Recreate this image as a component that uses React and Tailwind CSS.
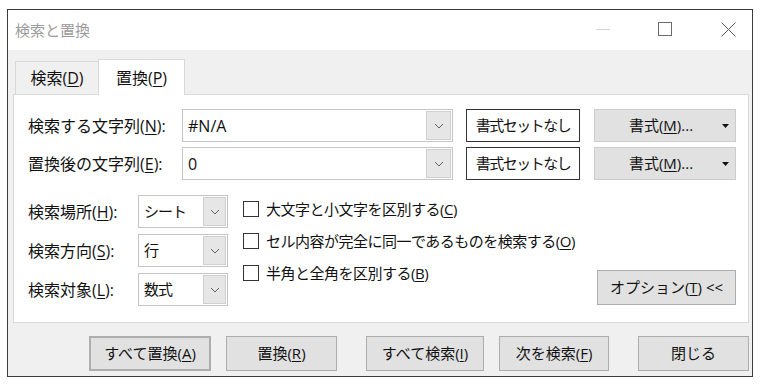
import React from "react";

const font = { fontFamily: '"Open Sans", "Noto Sans CJK JP", sans-serif' };

const Key = ({ children }) => (
  <span className="underline underline-offset-[2px] decoration-[1px]">{children}</span>
);

const Chevron = () => (
  <svg width="10" height="6" viewBox="0 0 10 6">
    <path d="M1 1 L5 5 L9 1" fill="none" stroke="#606060" strokeWidth="1" />
  </svg>
);

const Combo = ({ value, w, btn = "w-[25px]", text = "text-[16px]" }) => (
  <div className={`${w} h-[33px] flex border border-[#c4c4c4] bg-white`}>
    <div className={`flex-1 flex items-center pl-[5px] ${text} text-[#111]`}>{value}</div>
    <div className={`${btn} m-[1px] flex items-center justify-center bg-[#e6e6e6] border border-[#cfcfcf]`}>
      <Chevron />
    </div>
  </div>
);

const Check = ({ children }) => (
  <div className="h-[32px] flex items-center">
    <div className="w-[16px] h-[16px] border border-[#333] bg-white" />
    <span className="ml-[7px] text-[15px] tracking-[-0.5px] text-[#111]">{children}</span>
  </div>
);

const Btn = ({ children, className = "" }) => (
  <button
    className={`h-[35px] flex items-center justify-center bg-[#e1e1e1] border border-[#adadad] text-[15px] text-[#111] ${className}`}
  >
    {children}
  </button>
);

const FieldRow = ({ label, value, className = "" }) => (
  <div className={`flex items-center h-[33px] ${className}`}>
    <div className="w-[154px] text-[16px] text-[#111]">{label}</div>
    <Combo value={value} w="w-[271px]" />
    <button className="ml-[13px] w-[114px] h-[33px] bg-white border border-[#333] text-[15px] tracking-[-1.5px] text-[#111]">
      書式セットなし
    </button>
    <button className="ml-[14px] w-[142px] h-[33px] relative flex items-center justify-center bg-[#e1e1e1] border border-[#cccccc] text-[15px] text-[#111]">
      <span className="-ml-[8px]">
        書式(<Key>M</Key>)...
      </span>
      <svg className="absolute right-[6px] top-[14px]" width="7" height="4" viewBox="0 0 7 4">
        <path d="M0 0 H7 L3.5 4 Z" fill="#111" />
      </svg>
    </button>
  </div>
);

const SmallRow = ({ label, value }) => (
  <div className="flex items-center h-[33px]">
    <div className="w-[110px] text-[16px] text-[#111]">{label}</div>
    <Combo value={value} w="w-[90px]" btn="w-[23px]" text="text-[15px] tracking-[-1px]" />
  </div>
);

export default function App() {
  return (
    <div className="w-[760px] h-[384px] bg-white pl-[7px] pt-[9px]" style={font}>
      <div className="w-[746px] h-[368px] border border-[#3a3a3a] flex flex-col">
        {/* title bar */}
        <div className="h-[40px] bg-white flex items-center pl-[7px] relative">
          <span className="text-[15px] text-[#9b9b9b]">検索と置換</span>
          <div className="absolute left-[588px] top-[19px] w-[14px] h-px bg-[#d4d4d4]" />
          <div className="absolute left-[650px] top-[12px] w-[14px] h-[14px] border border-[#6b6b6b]" />
          <svg className="absolute left-[713px] top-[12px]" width="15" height="15" viewBox="0 0 15 15">
            <path d="M0.5 0.5 L14.5 14.5 M14.5 0.5 L0.5 14.5" stroke="#5a5a5a" strokeWidth="1" />
          </svg>
        </div>

        {/* body */}
        <div className="flex-1 bg-[#f0f0f0] pl-[5px]">
          <div className="mt-[9px] h-[35px] ml-[2px] flex items-end">
            <div className="w-[83px] h-[33px] border-t border-l border-[#d9d9d9] flex items-center justify-center text-[16px] text-[#111]">
              検索(<Key>D</Key>)
            </div>
            <div className="w-[87px] h-[36px] -mb-px relative z-10 bg-white border-t border-l border-r border-[#d9d9d9] flex items-center justify-center text-[16px] text-[#111]">
              置換(<Key>P</Key>)
            </div>
          </div>

          <div className="w-[736px] h-[229px] bg-white border border-[#d9d9d9] pl-[14px] pt-[14px]">
            <FieldRow label={<>検索する文字列(<Key>N</Key>):</>} value="#N/A" />
            <FieldRow label={<>置換後の文字列(<Key>E</Key>):</>} value="0" className="mt-[5px]" />

            <div className="mt-[15px] flex">
              <div className="flex flex-col gap-[6px]">
                <SmallRow label={<>検索場所(<Key>H</Key>):</>} value="シート" />
                <SmallRow label={<>検索方向(<Key>S</Key>):</>} value="行" />
                <SmallRow label={<>検索対象(<Key>L</Key>):</>} value="数式" />
              </div>
              <div className="ml-[15px] -mt-[2px] flex flex-col">
                <Check>大文字と小文字を区別する(<Key>C</Key>)</Check>
                <Check>セル内容が完全に同一であるものを検索する(<Key>O</Key>)</Check>
                <Check>半角と全角を区別する(<Key>B</Key>)</Check>
              </div>
              <div className="ml-auto mr-[12px] self-end mb-[1px]">
                <Btn className="w-[139px]">
                  オプション(<Key>T</Key>) &lt;&lt;
                </Btn>
              </div>
            </div>
          </div>

          <div className="mt-[13px] flex">
            <Btn className="ml-[76px] w-[122px] border-2 border-[#0078d7]">
              すべて置換(<Key>A</Key>)
            </Btn>
            <Btn className="ml-[15px] w-[111px]">
              置換(<Key>R</Key>)
            </Btn>
            <Btn className="ml-[29px] w-[118px]">
              すべて検索(<Key>I</Key>)
            </Btn>
            <Btn className="ml-[15px] w-[110px]">
              次を検索(<Key>F</Key>)
            </Btn>
            <Btn className="ml-[29px] w-[111px]">閉じる</Btn>
          </div>
        </div>
      </div>
    </div>
  );
}
